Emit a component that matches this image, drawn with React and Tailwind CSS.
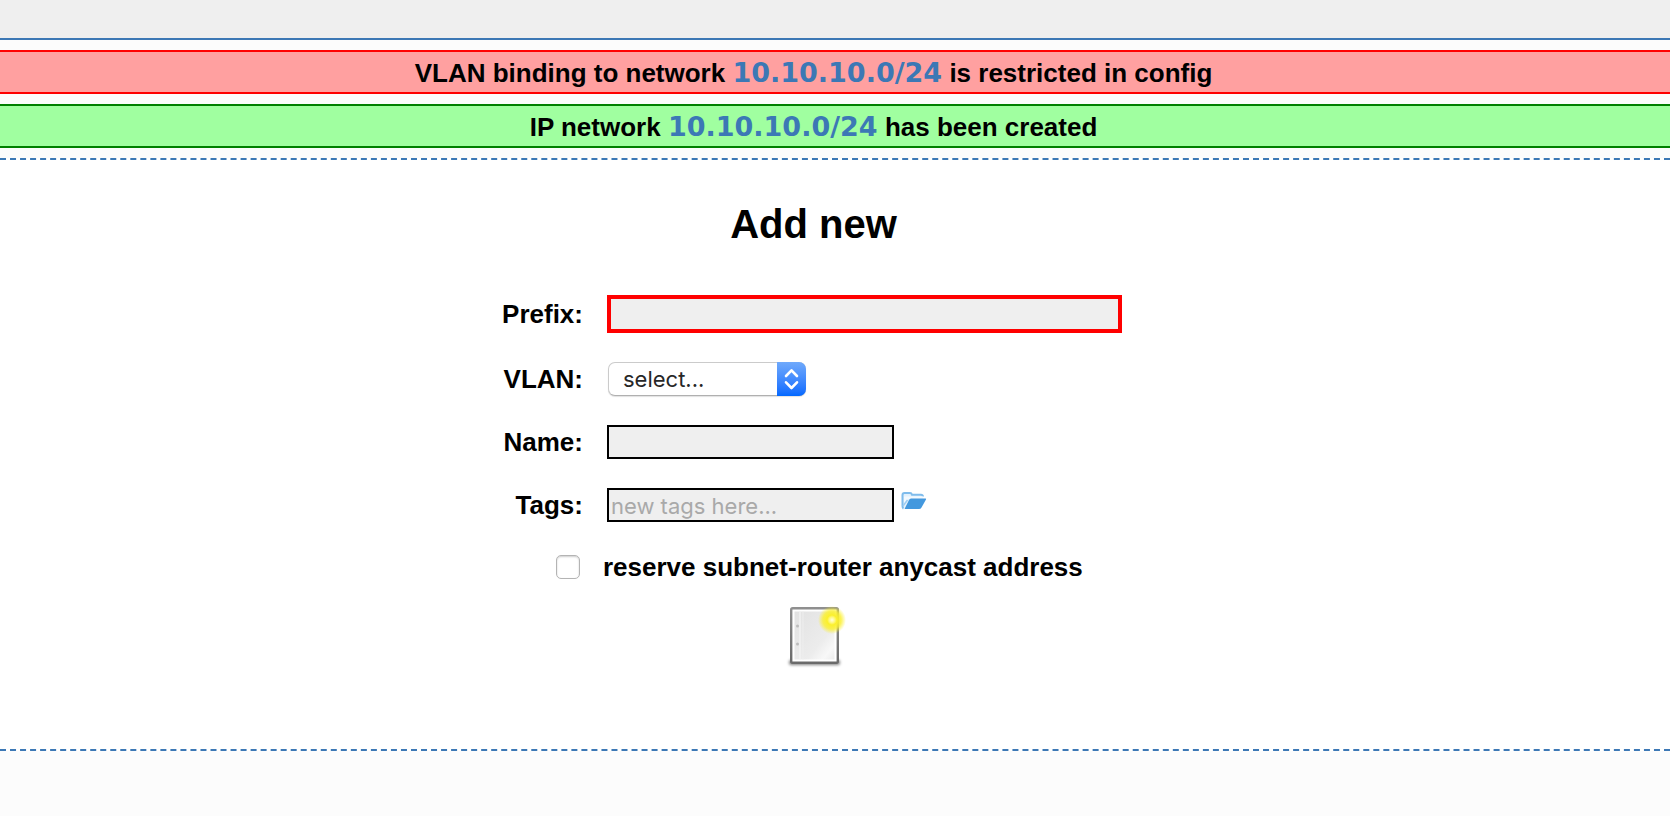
const MESSAGES = [
  { type: 'error', before: 'VLAN binding to network', net: '10.10.10.0/24', after: 'is restricted in config' },
  { type: 'success', before: 'IP network', net: '10.10.10.0/24', after: 'has been created' },
];

const MESSAGE_STYLES = {
  error: 'border-[#ff0000] bg-[#ffa0a0]',
  success: 'border-[#008000] bg-[#a0ffa0]',
};

function Message({ type, before, net, after }) {
  return (
    <p className={`h-11 border-y-2 pt-0.5 pr-[43px] text-center text-[26px] leading-[38px] font-bold ${MESSAGE_STYLES[type]}`}>
      {before}{' '}
      <a href="#network" className="font-['DejaVu_Sans',sans-serif] text-[27px] text-[#3c78b5]">{net}</a>{' '}
      {after}
    </p>
  );
}

function FolderIcon() {
  return (
    <svg width="26" height="20" viewBox="0 0 26 20" aria-hidden="true">
      <path
        d="M2.5 17.5 C1.5 17 1.5 16 1.5 15 V4 Q1.5 2 3.5 2 H9 Q10.5 2 11 3.7 H20 Q21.8 3.7 22 5.5"
        fill="#e3f1fc"
        stroke="#7fbcec"
        strokeWidth="2"
      />
      <path d="M3 15 L7 8 H22 V5.5 H3 Z" fill="#f2f9ff" />
      <path d="M2 15 L6.5 9" stroke="#9ccdf2" strokeWidth="1.5" fill="none" />
      <path d="M10 7.5 H24.5 Q25.5 7.5 25 8.5 L20.5 16.5 Q19.7 18 18 18 H3.5 L8 9 Q8.7 7.5 10 7.5 Z" fill="#4398de" />
    </svg>
  );
}

function NewPageIcon() {
  return (
    <svg width="66" height="66" viewBox="0 0 66 66" aria-hidden="true">
      <defs>
        <linearGradient id="paper" x1="0" y1="0" x2="1" y2="1">
          <stop offset="0" stopColor="#e2e2e2" />
          <stop offset="0.65" stopColor="#ececec" />
          <stop offset="0.85" stopColor="#f8f8f8" />
          <stop offset="1" stopColor="#ebebeb" />
        </linearGradient>
        <linearGradient id="edge" x1="0" y1="0" x2="0" y2="1">
          <stop offset="0" stopColor="#8f8f8f" />
          <stop offset="1" stopColor="#6a6a6a" />
        </linearGradient>
        <radialGradient id="glow">
          <stop offset="0" stopColor="#fffde0" />
          <stop offset="0.2" stopColor="#fff880" />
          <stop offset="0.35" stopColor="#fbf02c" />
          <stop offset="0.65" stopColor="#fbf02c" stopOpacity="0.8" />
          <stop offset="1" stopColor="#fbf02c" stopOpacity="0" />
        </radialGradient>
        <filter id="soft" x="-20%" y="-100%" width="140%" height="300%">
          <feGaussianBlur stdDeviation="1.5" />
        </filter>
      </defs>
      <rect x="8" y="57" width="51" height="5" rx="2" fill="#000" opacity="0.5" filter="url(#soft)" />
      <rect x="10.2" y="5.2" width="46.6" height="54.6" rx="1.5" fill="#fff" stroke="url(#edge)" strokeWidth="2.4" />
      <rect x="13.5" y="8.5" width="40" height="48" fill="url(#paper)" />
      <path d="M19 8.5 V56.5" stroke="#f2f2f2" strokeWidth="1.5" />
      <path d="M22 8.5 V56.5" stroke="#eeeeee" strokeWidth="1" />
      <circle cx="16.5" cy="23" r="1.5" fill="#bcbcbc" />
      <circle cx="16.5" cy="41" r="1.5" fill="#bcbcbc" />
      <circle cx="51" cy="17" r="14" fill="url(#glow)" />
    </svg>
  );
}

function Field({ id, label, children }) {
  return (
    <div className="grid grid-cols-[81px_1fr] items-center gap-x-6">
      <label htmlFor={id} className="text-right whitespace-nowrap">{label}:</label>
      <div className="flex items-center">{children}</div>
    </div>
  );
}

export default function App() {
  return (
    <div className="min-h-screen bg-[#fcfcfc] font-['Liberation_Sans',Arial,sans-serif] text-black">
      <header className="h-10 border-b-2 border-[#3c78b5] bg-[#efefef]" />

      <div className="flex flex-col gap-2.5 py-2.5">
        {MESSAGES.map((message) => (
          <Message key={message.type} {...message} />
        ))}
      </div>

      <main className="border-y-2 border-dashed border-[#3c78b5] bg-white pt-10 pr-[43px] pb-20">
        <h2 className="text-center text-[40px] leading-12 font-bold">Add new</h2>

        <form className="mx-auto mt-[47px] max-w-[623px] text-[26px] leading-8 font-bold" onSubmit={(e) => e.preventDefault()}>
          <div className="flex flex-col gap-[29px]">
            <Field id="prefix" label="Prefix">
              <input id="prefix" type="text" className="h-[38px] w-[515px] border-4 border-[#ff0000] bg-[#efefef] font-['Inter',sans-serif] text-[22px] font-normal outline-none" />
            </Field>

            <Field id="vlan" label="VLAN">
              <div className="relative ml-px">
                <select
                  id="vlan"
                  className="block h-[34px] w-[198px] appearance-none rounded-[7px] border border-[#cbcbcb] border-b-[#b0b0b0] bg-white pr-8 pl-3.5 font-['Inter',sans-serif] text-[22px] leading-8 font-normal text-[#272727] shadow-[0_1px_1px_rgba(0,0,0,0.12)]"
                >
                  <option>select...</option>
                </select>
                <span className="pointer-events-none absolute inset-y-0 right-0 w-[29px] rounded-r-[7px] bg-linear-to-b from-[#6fa9fb] to-[#0068ff]">
                  <svg width="29" height="34" viewBox="0 0 29 34" fill="none" stroke="#fff" strokeWidth="2.6" strokeLinecap="round" strokeLinejoin="round" aria-hidden="true">
                    <path d="M9 14 L14.5 8.3 L20 14 M9 20.3 L14.5 26 L20 20.3" />
                  </svg>
                </span>
              </div>
            </Field>

            <Field id="name" label="Name">
              <input id="name" type="text" className="h-[34px] w-[287px] border-2 border-black bg-[#efefef] font-['Inter',sans-serif] text-[22px] font-normal" />
            </Field>

            <Field id="tags" label="Tags">
              <input
                id="tags"
                type="text"
                placeholder="new tags here..."
                className="h-[34px] w-[287px] border-2 border-black bg-[#efefef] px-0.5 pt-0.5 font-['Inter',sans-serif] text-[22px] leading-7 font-normal placeholder:text-[#a9a9a9]"
              />
              <button type="button" aria-label="Choose tags" className="ml-[7px] pb-2">
                <FolderIcon />
              </button>
            </Field>

            <div className="flex items-center gap-[23px] pl-[54px]">
              <input
                id="anycast"
                type="checkbox"
                className="size-6 shrink-0 appearance-none rounded-[5px] border border-[#b4b4b4] bg-white shadow-[inset_0_1px_2px_rgba(0,0,0,0.2)]"
              />
              <label htmlFor="anycast">reserve subnet-router anycast address</label>
            </div>
          </div>

          <div className="flex justify-center pt-5">
            <button type="submit" aria-label="Add new network">
              <NewPageIcon />
            </button>
          </div>
        </form>
      </main>
    </div>
  );
}
